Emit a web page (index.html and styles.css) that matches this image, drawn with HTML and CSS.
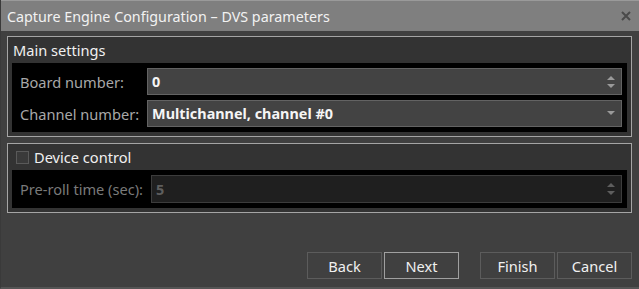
FILE: index.html
```html
<!DOCTYPE html>
<html lang="en">

<head>
    <meta charset="UTF-8">
    <title>Capture Engine Configuration – DVS parameters</title>
    <link rel="stylesheet" href="styles.css">
</head>

<body>
    <div class="window">
        <div class="title-bar">
            <span class="title">Capture Engine Configuration – DVS parameters</span>
            <svg class="close" width="10" height="10" viewBox="0 0 10 10">
                <path d="M1 1 L9 9 M9 1 L1 9" stroke="#4a4a4a" stroke-width="2" />
            </svg>
        </div>

        <div class="content">
            <div class="group">
                <div class="group-title">Main settings</div>
                <div class="group-body">
                    <label class="field-label">Board number:</label>
                    <div class="input">
                        <span class="value">0</span>
                        <span class="spinner">
                            <svg width="8" height="5" viewBox="0 0 8 5"><path d="M0 5 L4 1 L8 5 Z" fill="#9a9a9a" /></svg>
                            <svg width="8" height="5" viewBox="0 0 8 5"><path d="M0 0 L8 0 L4 4 Z" fill="#9a9a9a" /></svg>
                        </span>
                    </div>

                    <label class="field-label">Channel number:</label>
                    <div class="input">
                        <span class="value">Multichannel, channel #0</span>
                        <svg class="dropdown" width="8" height="5" viewBox="0 0 8 5"><path d="M0 0 L8 0 L4 4 Z" fill="#9a9a9a" /></svg>
                    </div>
                </div>
            </div>

            <div class="group second">
                <div class="group-title">
                    <span class="checkbox"></span>
                    Device control
                </div>
                <div class="group-body">
                    <label class="field-label disabled">Pre-roll time (sec):</label>
                    <div class="input disabled">
                        <span class="value">5</span>
                        <span class="spinner">
                            <svg width="8" height="5" viewBox="0 0 8 5"><path d="M0 5 L4 1 L8 5 Z" fill="#5e5e5e" /></svg>
                            <svg width="8" height="5" viewBox="0 0 8 5"><path d="M0 0 L8 0 L4 4 Z" fill="#5e5e5e" /></svg>
                        </span>
                    </div>
                </div>
            </div>
        </div>

        <div class="buttons">
            <button class="btn">Back</button>
            <button class="btn default">Next</button>
            <button class="btn spaced">Finish</button>
            <button class="btn">Cancel</button>
        </div>
    </div>
</body>

</html>
```

FILE: styles.css
```css
body {
    margin: 0;
    font-family: "Noto Sans", "Open Sans", sans-serif;
    font-size: 14.6px;
    background-color: #404040;
}

.window {
    width: 639px;
    height: 289px;
    box-sizing: border-box;
    background-color: #404040;
    border-left: 1px solid #3a3a3a;
    border-bottom: 2px solid #555555;
    display: flex;
    flex-direction: column;
}

.title-bar {
    height: 31px;
    box-sizing: border-box;
    background-color: #7f7f7f;
    border-top: 1px solid #9a9a9a;
    display: flex;
    align-items: center;
    justify-content: space-between;
    padding: 0 8px 0 6px;
    color: #f2f2f2;
    font-size: 14.3px;
}

.content {
    padding: 5px 7px 0 6px;
}

.group {
    border: 1px solid #a5a5a5;
    background-color: #333333;
    padding: 0 4px 4px 4px;
}

.group.second {
    margin-top: 6px;
}

.group-title {
    height: 26px;
    display: flex;
    align-items: center;
    padding-left: 1px;
    color: #f0f0f0;
}

.checkbox {
    width: 11px;
    height: 11px;
    border: 1px solid #5a5a5a;
    background-color: #3a3a3a;
    margin: 0 5px 0 3px;
}

.group-body {
    background-color: #000000;
    padding: 5px 5px 5px 8px;
    display: grid;
    grid-template-columns: auto 1fr;
    column-gap: 8px;
    row-gap: 5px;
    align-items: center;
}

.field-label {
    color: #a8a8a8;
}

.field-label.disabled {
    color: #7a7a7a;
}

.input {
    height: 27px;
    box-sizing: border-box;
    background-color: #434343;
    border: 1px solid #636363;
    display: flex;
    align-items: center;
    justify-content: space-between;
    padding: 0 6px 0 4px;
}

.input.disabled {
    height: 28px;
    background-color: #1f1f1f;
    border-color: #3c3c3c;
}

.value {
    color: #f5f5f5;
    font-weight: bold;
    font-size: 14.4px;
}

.input.disabled .value {
    color: #5e5e5e;
}

.spinner {
    display: flex;
    flex-direction: column;
    gap: 4px;
}

.spinner svg,
.dropdown {
    display: block;
}

.buttons {
    margin-top: auto;
    display: flex;
    justify-content: flex-end;
    gap: 2px;
    padding: 0 7px 8px 0;
}

.btn {
    width: 75px;
    height: 27px;
    background-color: #404040;
    border: 1px solid #5c5c5c;
    color: #f0f0f0;
    font-family: "Noto Sans", "Open Sans", sans-serif;
    font-size: 14.6px;
    padding: 0;
}

.btn.default {
    border-color: #a0a0a0;
}

.btn.spaced {
    margin-left: 19px;
}
```
